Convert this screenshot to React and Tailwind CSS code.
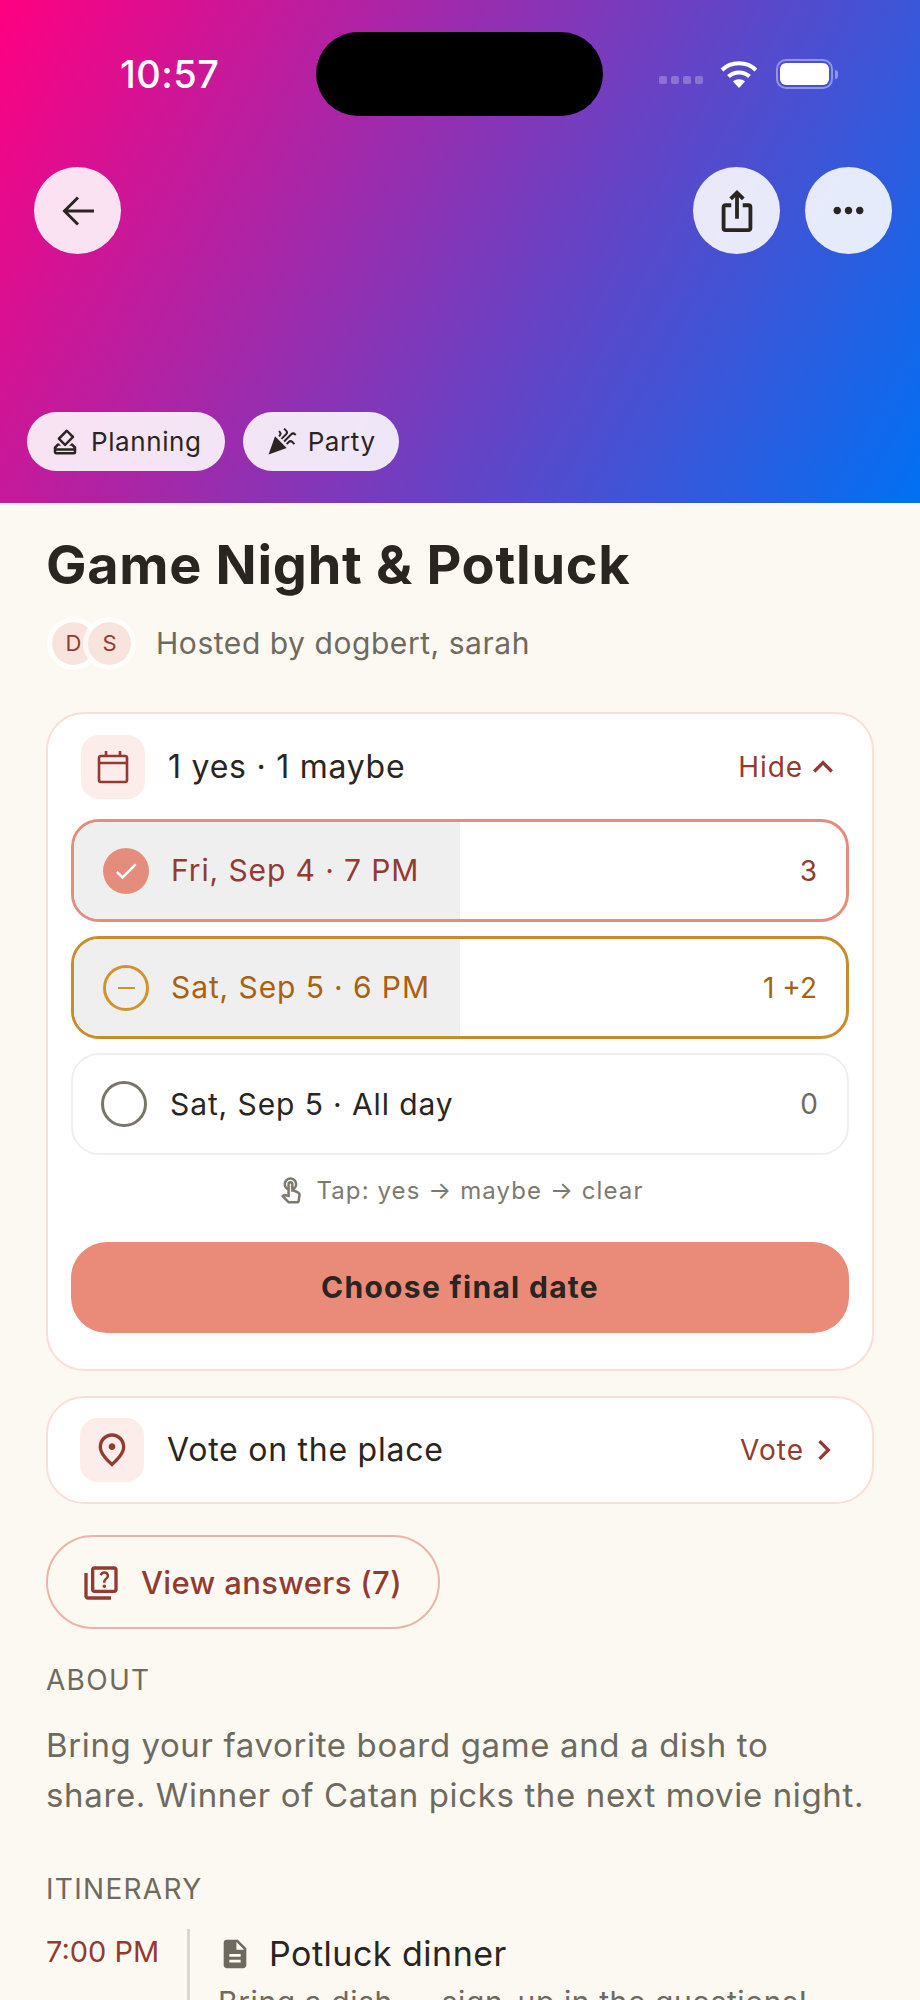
import React from 'react';
import { MdOutlineHowToVote, MdCelebration, MdOutlineIosShare, MdMoreHoriz, MdExpandLess, MdChevronRight, MdCheck, MdOutlineTouchApp, MdOutlineQuiz, MdOutlinePlace, MdDescription } from 'react-icons/md';
import clsx from 'clsx';

function CalendarIcon() {
    return (
        <svg width="32" height="34" viewBox="0 0 32 34" fill="none" stroke="currentColor" strokeWidth="2.6">
            <rect x="2" y="6" width="28" height="26" rx="2" />
            <path d="M2 13h28M9 1v5M23 1v5" />
        </svg>
    );
}

function WifiIcon() {
    return (
        <svg width="38" height="30" viewBox="0 0 38 30" fill="none" stroke="white" strokeWidth="4">
            <path d="M2 11C11 2 27 2 36 11" />
            <path d="M8.5 17.5C14 12 24 12 29.5 17.5" />
            <path d="M19 29l-6-6.5c3-3 9-3 12 0z" fill="white" stroke="none" />
        </svg>
    );
}

function BackIcon() {
    return (
        <svg width="32" height="30" viewBox="0 0 32 30" fill="none" stroke="currentColor" strokeWidth="3">
            <path d="M32 15H3M16 1.5L2.5 15L16 28.5" />
        </svg>
    );
}

function CircleButton({ children }) {
    return (
        <button className="w-[87px] h-[87px] rounded-full bg-white/88 flex items-center justify-center text-[#2a2520]">
            {children}
        </button>
    );
}

function Pill({ icon, label }) {
    return (
        <div className="h-[59px] pl-[23px] pr-[23px] rounded-full bg-white/88 flex items-center gap-[11px] text-[26px] text-[#2a2520] tracking-[0.6px]">
            {icon}
            <span>{label}</span>
        </div>
    );
}

function DateRow({ tone, fill, mark, label, count }) {
    return (
        <div className={clsx(
            "relative rounded-[28px] overflow-hidden flex items-center pr-[29px] bg-white",
            tone === 'yes' && "h-[103px] pl-[29px] border-[3px] border-[#e58d7c] text-[#933b30]",
            tone === 'maybe' && "h-[103px] pl-[29px] border-[3px] border-[#c98c2c] text-[#a8620f]",
            !tone && "h-[102px] pl-[28px] border-[2px] border-[#f0efee] text-[#2a2520]"
        )}>
            {fill && <div className="absolute left-0 top-0 bottom-0 w-[386px] bg-[#efefef]" />}
            <div className="relative flex items-center gap-[22px] flex-1">
                {mark}
                <span className="text-[30px] tracking-[0.9px]">{label}</span>
            </div>
            <span className={clsx("relative text-[28px]", !tone && "text-[#6f6a60]")}>{count}</span>
        </div>
    );
}

function SectionLabel({ children }) {
    return <div className="text-[28px] text-[#6f6a60] tracking-[1.3px] leading-[36px]">{children}</div>;
}

export default function App() {
    return (
        <div className="w-[920px] h-[2000px] overflow-hidden bg-[#fbf9f2] font-['Inter',sans-serif]">
            {/* Hero */}
            <div className="relative h-[503px] flex flex-col bg-[linear-gradient(118.7deg,#ff0080,#0070f3)]">
                <div className="h-[116px] pt-[32px] flex items-center justify-between pl-[120px] pr-[82px]">
                    <span className="text-[38px] font-medium text-white leading-none tracking-[0.5px]">10:57</span>
                    <div className="flex items-center">
                        <div className="flex gap-[4px] mt-[12px] mr-[17px]">
                            <span className="w-[8px] h-[8px] rounded-[2px] bg-white/25" />
                            <span className="w-[8px] h-[8px] rounded-[2px] bg-white/25" />
                            <span className="w-[8px] h-[8px] rounded-[2px] bg-white/25" />
                            <span className="w-[8px] h-[8px] rounded-[2px] bg-white/25" />
                        </div>
                        <WifiIcon />
                        <div className="ml-[18px] w-[57px] h-[30px] rounded-[10px] border-[2px] border-white/40 p-[2px]">
                            <div className="w-full h-full rounded-[6px] bg-white" />
                        </div>
                        <div className="ml-[2px] w-[3px] h-[9px] rounded-r-full bg-white/40" />
                    </div>
                </div>
                {/* dynamic island */}
                <div className="absolute left-[316px] top-[32px] w-[287px] h-[84px] rounded-full bg-black" />

                <div className="mt-[51px] pl-[34px] pr-[28px] flex justify-between">
                    <CircleButton><BackIcon /></CircleButton>
                    <div className="flex gap-[25px]">
                        <CircleButton><MdOutlineIosShare size={46} /></CircleButton>
                        <CircleButton><MdMoreHoriz size={45} /></CircleButton>
                    </div>
                </div>

                <div className="mt-[158px] pl-[27px] flex gap-[18px]">
                    <Pill icon={<MdOutlineHowToVote size={30} />} label="Planning" />
                    <Pill icon={<MdCelebration size={31} />} label="Party" />
                </div>
            </div>

            {/* Body */}
            <div className="px-[46px]">
                <h1 className="mt-[30px] text-[54px] font-bold leading-[64px] text-[#2a2520] tracking-[0.7px]">Game Night &amp; Potluck</h1>

                <div className="mt-[20px] flex items-center">
                    <div className="flex pl-[1px]">
                        <div className="w-[53px] h-[53px] rounded-full border-[5px] border-white/75 bg-[#f8e3dd] bg-clip-padding text-[#933b30] text-[22px] flex items-center justify-center">D</div>
                        <div className="-ml-[17px] w-[53px] h-[53px] rounded-full border-[5px] border-white/75 bg-[#f8e3dd] bg-clip-padding text-[#933b30] text-[22px] flex items-center justify-center">S</div>
                    </div>
                    <span className="ml-[20px] text-[30px] text-[#6f6a60] tracking-[0.55px]">Hosted by dogbert, sarah</span>
                </div>

                {/* Dates card */}
                <div className="mt-[42px] rounded-[38px] border-[2px] border-[#f9dfd8] bg-white pl-[23px] pr-[23px] pt-[21px] pb-[36px]">
                    <div className="flex items-center pl-[10px] pr-[10px]">
                        <div className="w-[64px] h-[64px] rounded-[18px] bg-[#fcecea] text-[#933b30] flex items-center justify-center">
                            <CalendarIcon />
                        </div>
                        <span className="ml-[23px] flex-1 text-[32px] text-[#2a2520] tracking-[0.75px]">1 yes · 1 maybe</span>
                        <span className="text-[28px] text-[#933b30] tracking-[0.9px]">Hide</span>
                        <MdExpandLess size={40} className="-mr-[4px] text-[#933b30]" />
                    </div>

                    <div className="mt-[20px] flex flex-col gap-[14px]">
                        <DateRow
                            tone="yes"
                            fill
                            mark={<div className="w-[46px] h-[46px] rounded-full bg-[#e58d7c] flex items-center justify-center text-white"><MdCheck size={28} /></div>}
                            label="Fri, Sep 4 · 7 PM"
                            count="3"
                        />
                        <DateRow
                            tone="maybe"
                            fill
                            mark={<div className="w-[46px] h-[46px] rounded-full border-[3px] border-[#d0932f] flex items-center justify-center"><div className="w-[17px] h-[2px] bg-[#d0932f]" /></div>}
                            label="Sat, Sep 5 · 6 PM"
                            count="1 +2"
                        />
                        <DateRow
                            mark={<div className="w-[46px] h-[46px] rounded-full border-[3.5px] border-[#7a7569] mr-[1px]" />}
                            label="Sat, Sep 5 · All day"
                            count="0"
                        />
                    </div>

                    <div className="mt-[20px] flex items-center justify-center gap-[10px] text-[24px] text-[#7e796f] tracking-[1.1px] leading-[32px]">
                        <MdOutlineTouchApp size={30} />
                        <span>Tap: yes → maybe → clear</span>
                    </div>

                    <button className="mt-[35px] w-full h-[91px] rounded-[36px] bg-[#e98b78] text-[30px] font-bold text-[#2a2520] tracking-[1.3px]">Choose final date</button>
                </div>

                {/* Place */}
                <div className="mt-[25px] h-[108px] rounded-[38px] border-[2px] border-[#f9dfd8] bg-white flex items-center pl-[32px] pr-[34px]">
                    <div className="w-[64px] h-[64px] rounded-[18px] bg-[#fcecea] text-[#933b30] flex items-center justify-center">
                        <MdOutlinePlace size={40} />
                    </div>
                    <span className="ml-[23px] flex-1 text-[32px] text-[#2a2520] tracking-[0.75px]">Vote on the place</span>
                    <span className="text-[28px] text-[#933b30] tracking-[1px]">Vote</span>
                    <MdChevronRight size={40} className="-mr-[6px] text-[#933b30]" />
                </div>

                {/* Answers */}
                <button className="mt-[31px] h-[94px] w-[394px] pt-[2px] rounded-full border-[2px] border-[#ecb3a8] flex items-center pl-[33px] text-[#933b30]">
                    <MdOutlineQuiz size={40} />
                    <span className="ml-[20px] text-[31px] font-medium tracking-[0.35px]">View answers (7)</span>
                </button>

                <div className="mt-[33px]"><SectionLabel>ABOUT</SectionLabel></div>
                <p className="mt-[22px] text-[33px] leading-[50px] text-[#6f6a60] tracking-[0.64px]">
                    Bring your favorite board game and a dish to share. Winner of Catan picks the next movie night.
                </p>

                <div className="mt-[51px]"><SectionLabel>ITINERARY</SectionLabel></div>
                <div className="mt-[22px] flex">
                    <div className="w-[116px] pt-[3px] text-[29px] text-[#933b30] leading-[40px]">7:00 PM</div>
                    <div className="border-l-[3px] border-[#d9d7d2] pl-[28px] ml-[25px]">
                        <div className="flex items-center gap-[17px] h-[49px]">
                            <MdDescription size={34} className="text-[#6f6a60]" />
                            <span className="text-[34px] text-[#2a2520] tracking-[0.5px]">Potluck dinner</span>
                        </div>
                        <div className="mt-[2px] text-[30px] text-[#6f6a60] tracking-[0.6px] whitespace-nowrap">Bring a dish — sign-up in the questions!</div>
                    </div>
                </div>
            </div>
        </div>
    );
}
